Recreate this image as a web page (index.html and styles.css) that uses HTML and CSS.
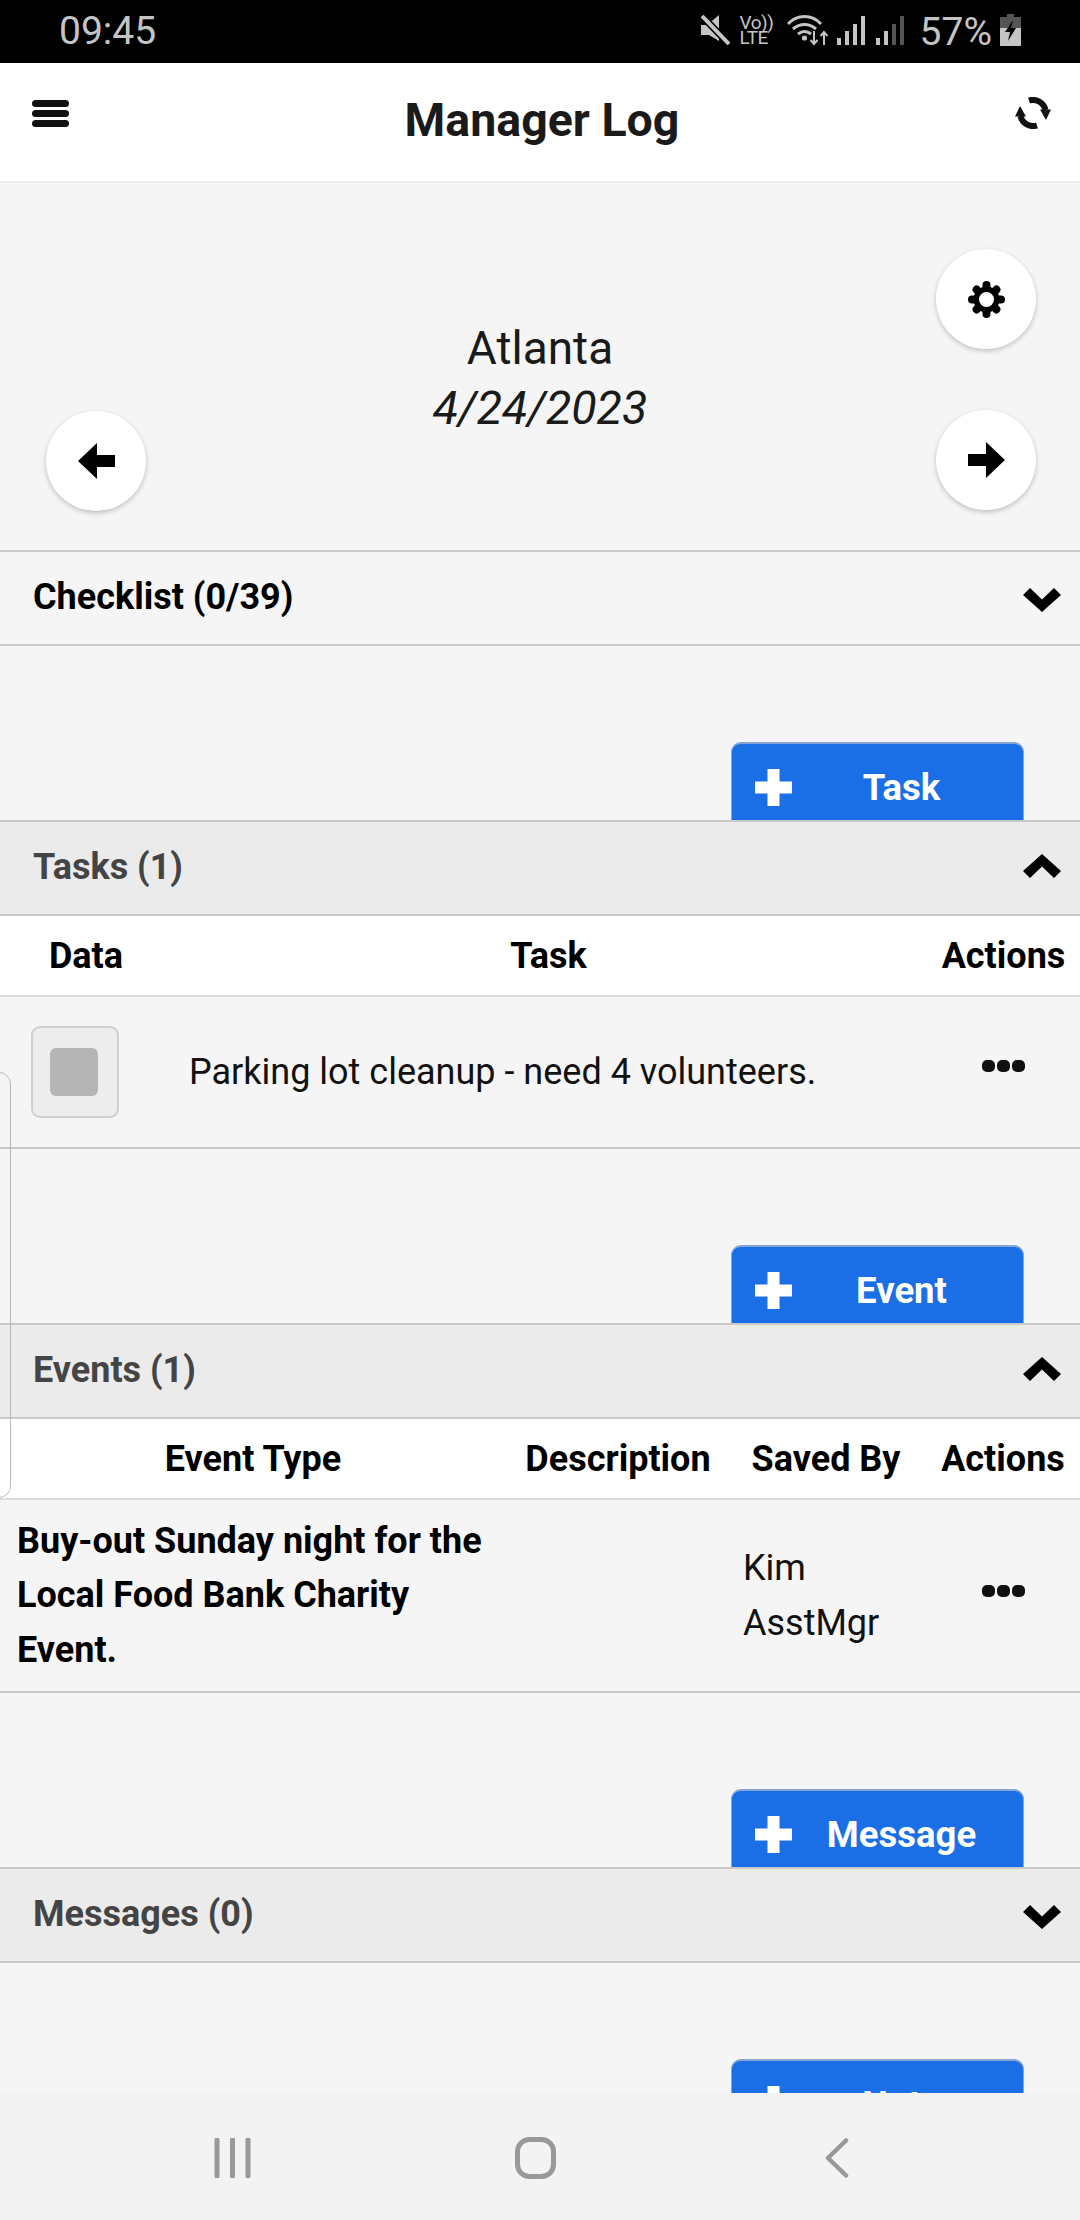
FILE: index.html
```html
<!DOCTYPE html>
<html lang="en">
<head>
<meta charset="utf-8">
<title>Manager Log</title>
<link rel="stylesheet" href="styles.css">
</head>
<body>
<svg class="defs" width="0" height="0" aria-hidden="true">
  <symbol id="i-bars" viewBox="0 0 37 27"><rect width="37" height="7" rx="3.500"/><rect y="10" width="37" height="7" rx="3.500"/><rect y="20" width="37" height="7" rx="3.500"/></symbol>
  <symbol id="i-sync" viewBox="0 0 36 32"><path d="M14 3.500A13 13 0 0 1 30.500 13M22 28.500A13 13 0 0 1 5.500 19" fill="none" stroke="currentColor" stroke-width="6"/><path d="M25 12.500h11L31 23zM11 19.500H0L5 9z"/></symbol>
  <symbol id="i-cog" viewBox="0 0 37 37"><g stroke="currentColor" stroke-width="8" stroke-linecap="round"><path d="M18.500 4v29M4 18.500h29M8.600 8.600l19.800 19.800M28.400 8.600 8.600 28.400"/></g><circle cx="18.500" cy="18.500" r="13"/><circle cx="18.500" cy="18.500" r="7.500" fill="#fff"/></symbol>
  <symbol id="i-left" viewBox="0 0 37 36"><path d="M19 0 0 18l19 18V24h18V12H19z"/></symbol>
  <symbol id="i-right" viewBox="0 0 37 36"><path d="M18 0l19 18-19 18V24H0V12h18z"/></symbol>
  <symbol id="i-down" viewBox="0 0 38 24"><path d="M19 24 38 7l-7-7-12 11.500L7 0 0 7z"/></symbol>
  <symbol id="i-up" viewBox="0 0 38 24"><path d="M19 0l19 17-7 7-12-11.500L7 24l-7-7z"/></symbol>
  <symbol id="i-plus" viewBox="0 0 37 37"><path d="M12.500 0h12v12.500H37v12H24.500V37h-12V24.500H0v-12h12.500z"/></symbol>
  <symbol id="i-dots" viewBox="0 0 43 12"><rect width="13" height="12" rx="5"/><rect x="15" width="13" height="12" rx="5"/><rect x="30" width="13" height="12" rx="5"/></symbol>
</svg>

<div class="phone">
  <div class="status">
    <span class="clock">09:45</span>
    <div class="status-icons">
      <svg class="st-mute" viewBox="0 0 29 30"><path d="M0 10h6l12-10v26L8 20H0z" fill="#c4c4c4"/><path d="M1 1l27 28" stroke="#000" stroke-width="7"/><path d="M1 1l27 28" stroke="#c4c4c4" stroke-width="4"/></svg>
      <span class="st-volte">Vo))<br>LTE</span>
      <svg class="st-wifi" viewBox="0 0 41 32"><path d="M1 10C10 0 25 0 34 10M6 15c7-6 16-6 23 0M11 20c4-3 9-3 13 0" fill="none" stroke="#c4c4c4" stroke-width="3"/><circle cx="17.500" cy="24" r="2.600" fill="#c4c4c4"/><path d="M27 17v13m-3.500-4 3.500 4 3.500-4M37 31V18m-3.500 4 3.500-4 3.500 4" fill="none" stroke="#c4c4c4" stroke-width="2"/></svg>
      <svg class="st-signal" viewBox="0 0 28 29"><rect x="0" y="22" width="4" height="7" fill="#c4c4c4"/><rect x="8" y="15" width="4" height="14" fill="#c4c4c4"/><rect x="16" y="8" width="4" height="21" fill="#c4c4c4"/><rect x="24" y="0" width="4" height="29" fill="#c4c4c4"/></svg>
      <svg class="st-signal st-signal-b" viewBox="0 0 28 29"><rect x="0" y="22" width="4" height="7" fill="#c4c4c4"/><rect x="8" y="15" width="4" height="14" fill="#c4c4c4"/><rect x="16" y="8" width="4" height="21" fill="#555"/><rect x="24" y="0" width="4" height="29" fill="#555"/></svg>
      <span class="st-pct">57%</span>
      <svg class="st-batt" viewBox="0 0 21 32"><path d="M7 0h7v3H7z" fill="#555"/><rect y="3" width="21" height="11" fill="#555"/><rect y="14" width="21" height="18" fill="#c4c4c4"/><path d="M13 6 5 18h5l-2 9 8-13h-5z" fill="#000"/></svg>
    </div>
  </div>

  <header class="topbar">
    <svg class="ic ic-bars"><use href="#i-bars"/></svg>
    <h1 class="title">Manager Log</h1>
    <svg class="ic ic-sync"><use href="#i-sync"/></svg>
  </header>

  <main class="content">
    <span class="drawer-edge"></span>
    <section class="hero">
      <div class="hero-left">
        <button class="round"><svg class="ic ic-arrow"><use href="#i-left"/></svg></button>
      </div>
      <div class="hero-mid">
        <div class="site">Atlanta</div>
        <div class="date">4/24/2023</div>
      </div>
      <div class="hero-right">
        <button class="round"><svg class="ic ic-cog"><use href="#i-cog"/></svg></button>
        <button class="round"><svg class="ic ic-arrow"><use href="#i-right"/></svg></button>
      </div>
    </section>

    <div class="bar bar-plain"><span>Checklist (0/39)</span><svg class="ic ic-chev ic-chev-down"><use href="#i-down"/></svg></div>

    <div class="add-zone"><button class="add"><svg class="ic ic-plus"><use href="#i-plus"/></svg><span>Task</span></button></div>
    <div class="bar"><span>Tasks (1)</span><svg class="ic ic-chev ic-chev-up"><use href="#i-up"/></svg></div>
    <div class="grid-head tasks-cols">
      <span>Data</span><span>Task</span><span>Actions</span>
    </div>
    <div class="grid-row tasks-cols task-row">
      <div class="check-wrap"><span class="check"><span class="check-in"></span></span></div>
      <div class="task-text">Parking lot cleanup - need 4 volunteers.</div>
      <div class="act act-task"><svg class="ic ic-dots"><use href="#i-dots"/></svg></div>
    </div>

    <div class="add-zone"><button class="add"><svg class="ic ic-plus"><use href="#i-plus"/></svg><span>Event</span></button></div>
    <div class="bar"><span>Events (1)</span><svg class="ic ic-chev ic-chev-up"><use href="#i-up"/></svg></div>
    <div class="grid-head events-cols">
      <span>Event Type</span><span>Description</span><span>Saved By</span><span class="head-actions">Actions</span>
    </div>
    <div class="grid-row events-cols event-row">
      <div class="event-text">Buy-out Sunday night for the Local Food Bank Charity Event.</div>
      <div></div>
      <div class="saved">Kim AsstMgr</div>
      <div class="act act-event"><svg class="ic ic-dots"><use href="#i-dots"/></svg></div>
    </div>

    <div class="add-zone"><button class="add"><svg class="ic ic-plus"><use href="#i-plus"/></svg><span>Message</span></button></div>
    <div class="bar"><span>Messages (0)</span><svg class="ic ic-chev ic-chev-down"><use href="#i-down"/></svg></div>

    <div class="add-zone add-zone-last"><button class="add"><svg class="ic ic-plus"><use href="#i-plus"/></svg><span>Note</span></button></div>
  </main>

  <nav class="softkeys">
    <svg class="sk sk-recent" viewBox="0 0 37 40"><path d="M3 2v36M18.500 2v36M34 2v36" fill="none" stroke="#999" stroke-width="5" stroke-linecap="round"/></svg>
    <svg class="sk sk-home" viewBox="0 0 41 42"><rect x="2.500" y="2.500" width="36" height="37" rx="12" fill="none" stroke="#999" stroke-width="5"/></svg>
    <svg class="sk sk-back" viewBox="0 0 24 40"><path d="M21 2.500 3 20l18 17.500" fill="none" stroke="#999" stroke-width="4.500" stroke-linecap="round" stroke-linejoin="round"/></svg>
  </nav>
</div>
</body>
</html>
```
FILE: styles.css
```css
* { box-sizing: border-box; }
html, body { margin: 0; padding: 0; }
body { width: 1080px; height: 2220px; overflow: hidden; font-family: Roboto, "Liberation Sans", sans-serif; color: #000; }
.defs { position: absolute; }
.ic { display: block; fill: currentColor; flex: none; }

.phone { width: 1080px; height: 2220px; display: flex; flex-direction: column; background: #f5f5f5; }

/* status bar */
.status { height: 63px; flex: none; background: #000; color: #c4c4c4; display: flex; align-items: center; justify-content: space-between; padding: 0 59px 0 59px; }
.clock { font-size: 39px; line-height: 63px; }
.status-icons { display: flex; align-items: center; padding-bottom: 3px; }
.st-mute { width: 29px; height: 30px; }
.st-volte { display: block; font-size: 19px; line-height: 15.500px; margin-left: 10px; width: 31px; white-space: nowrap; letter-spacing: -.5px; }
.st-wifi { width: 41px; height: 32px; margin-left: 16px; }
.st-signal { width: 28px; height: 29px; margin-left: 9px; }
.st-signal-b { margin-left: 11px; }
.st-pct { font-size: 39px; line-height: 40px; margin-left: 16px; margin-top: 3px; }
.st-batt { width: 21px; height: 32px; margin-left: 8px; }

/* top bar */
.topbar { height: 120px; flex: none; background: #fff; border-bottom: 2px solid #ececec; display: flex; align-items: flex-start; justify-content: space-between; padding: 0 29px 0 32px; }
.title { margin: 27px 0 0; font-size: 46.500px; line-height: 60px; font-weight: 700; color: #1a1a1a; }
.ic-bars { width: 37px; height: 27px; margin-top: 37px; color: #111; }
.ic-sync { width: 36px; height: 32px; margin-top: 34px; color: #111; }

/* content */
.content { flex: 1; min-height: 0; overflow: hidden; position: relative; background: #f5f5f5; }
.drawer-edge { position: absolute; left: -20px; top: 889px; width: 30.500px; height: 426px; border: 1.500px solid #b8b8b8; border-radius: 12px; z-index: 2; }

.hero { height: 367px; display: grid; grid-template-columns: 196px 1fr 196px; }
.hero-left { display: flex; align-items: flex-end; justify-content: flex-end; padding: 0 50px 39px 0; }
.hero-right { display: flex; flex-direction: column; align-items: flex-start; gap: 61px; padding: 66px 0 0 52px; }
.hero-mid { text-align: center; padding-top: 135px; color: #1a1a1a; }
.site { font-size: 46px; line-height: 60px; }
.date { font-size: 46.500px; line-height: 60px; font-style: italic; }
.round { width: 100px; height: 100px; border-radius: 50%; background: #fff; border: 0; padding: 0; display: flex; align-items: center; justify-content: center; box-shadow: 0 2px 5px rgba(0,0,0,.22); color: #000; }
.ic-cog { width: 37px; height: 37px; }
.ic-arrow { width: 37px; height: 36px; }

.bar { height: 96px; display: flex; align-items: center; justify-content: space-between; padding: 0 19px 2px 33px; background: #ebebeb; border-top: 2px solid #c9c9c9; border-bottom: 2px solid #c9c9c9; font-size: 36px; font-weight: 700; color: #444; position: relative; }
.bar .ic { color: #000; }
.bar-plain { background: transparent; color: #000; }
.ic-chev { width: 38px; height: 24px; }
.ic-chev-down { margin-top: 6px; }
.ic-chev-up { margin-top: -2px; }

.add-zone { height: 174px; padding: 96px 56px 0 0; display: flex; justify-content: flex-end; align-items: flex-start; overflow: hidden; }
.add-zone-last { height: 130px; }
.add { width: 293px; height: 96px; flex: none; background: #1a6fe6; border: 1.500px solid #86a5d2; border-top-width: 2px; border-radius: 10px; color: #fff; font: 700 36.500px/1 Roboto, "Liberation Sans", sans-serif; display: flex; align-items: flex-start; padding: 20px 0 0 23px; }
.add span { flex: 1; text-align: center; margin-top: 2px; padding-left: 12px; padding-right: 24px; line-height: 44px; }
.ic-plus { width: 37px; height: 37px; margin-top: 5px; }

/* tables */
.grid-head { height: 81px; background: #fff; border-bottom: 2px solid #dcdcdc; display: grid; align-items: center; font-size: 36px; font-weight: 700; text-align: center; }
.head-actions { padding-left: 4px; }
.grid-row { display: grid; border-bottom: 2px solid #c9c9c9; font-size: 36px; line-height: 54.500px; align-items: center; color: #111; }
.tasks-cols { grid-template-columns: 172px 753px 157px; }
.events-cols { grid-template-columns: 506px 224px 192px 158px; }
.task-row { height: 152px; }
.event-row { height: 193px; }
.check-wrap { display: flex; align-items: center; padding-left: 31px; }
.check { width: 88px; height: 92px; background: #ededed; border: 2px solid #cfcfcf; border-radius: 9px; display: flex; align-items: center; justify-content: center; padding-right: 3px; }
.check-in { width: 48px; height: 48px; background: #b5b5b5; border-radius: 6px; }
.task-text { padding-left: 17px; white-space: nowrap; }
.act { display: flex; justify-content: center; }
.act-task { margin-bottom: 13px; }
.act-event { margin-bottom: 10px; padding-left: 5px; }
.ic-dots { width: 43px; height: 12px; }
.event-text { font-weight: 700; padding: 0 17px; color: #000; }
.saved { padding: 0 12px 0 13px; }

/* soft keys */
.softkeys { height: 127px; flex: none; background: #f3f3f3; display: flex; align-items: center; padding: 2px 0 0 214px; position: relative; z-index: 3; }
.sk { display: block; height: 40px; flex: none; }
.sk-recent { width: 37px; }
.sk-home { width: 41px; height: 42px; margin-left: 264px; }
.sk-back { width: 24px; margin-left: 269px; }
```
